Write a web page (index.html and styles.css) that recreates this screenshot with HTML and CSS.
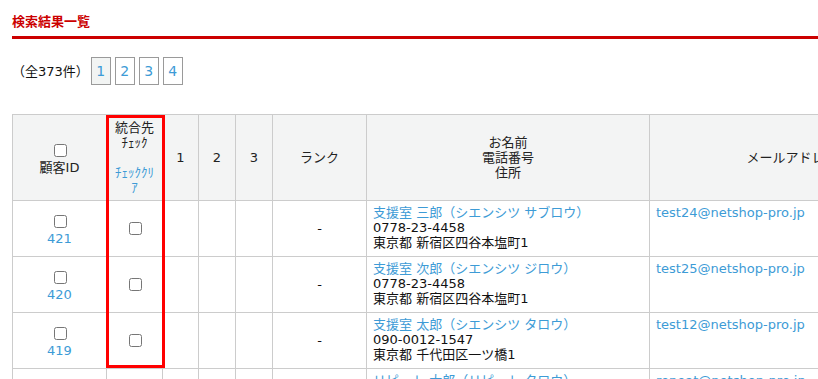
FILE: index.html
```html
<!DOCTYPE html>
<html lang="ja">
<head>
  <meta charset="UTF-8" />
  <meta name="viewport" content="width=device-width, initial-scale=1.0"/>
  <title>検索結果一覧</title>
  <link rel="stylesheet" href="styles.css">
</head>
<body>
  <main class="page">
    <h2 class="section-title">検索結果一覧</h2>

    <div class="pager">
      <span class="pager-count">（全373件）</span>
      <a href="#" class="pager-link current">1</a>
      <a href="#" class="pager-link">2</a>
      <a href="#" class="pager-link">3</a>
      <a href="#" class="pager-link">4</a>
    </div>

    <div class="result">
      <table class="result-table">
        <colgroup>
          <col class="col-id">
          <col class="col-merge">
          <col class="col-n1">
          <col class="col-num">
          <col class="col-num">
          <col class="col-rank">
          <col class="col-name">
          <col class="col-mail">
        </colgroup>
        <thead>
          <tr>
            <th><input type="checkbox" /><br>顧客ID</th>
            <th>統合先<br>ﾁｪｯｸ<br><br><a href="#">ﾁｪｯｸｸﾘｱ</a></th>
            <th>1</th>
            <th>2</th>
            <th>3</th>
            <th>ランク</th>
            <th>お名前<br>電話番号<br>住所</th>
            <th>メールアドレス</th>
          </tr>
        </thead>
        <tbody>
          <tr>
            <td class="center"><input type="checkbox" /><br><a href="#">421</a></td>
            <td class="center"><input type="checkbox" /></td>
            <td></td>
            <td></td>
            <td></td>
            <td class="center">-</td>
            <td><a href="#">支援室 三郎（シエンシツ サブロウ）</a><br>0778-23-4458<br>東京都 新宿区四谷本塩町1</td>
            <td><a href="#">test24@netshop-pro.jp</a></td>
          </tr>
          <tr>
            <td class="center"><input type="checkbox" /><br><a href="#">420</a></td>
            <td class="center"><input type="checkbox" /></td>
            <td></td>
            <td></td>
            <td></td>
            <td class="center">-</td>
            <td><a href="#">支援室 次郎（シエンシツ ジロウ）</a><br>0778-23-4458<br>東京都 新宿区四谷本塩町1</td>
            <td><a href="#">test25@netshop-pro.jp</a></td>
          </tr>
          <tr>
            <td class="center"><input type="checkbox" /><br><a href="#">419</a></td>
            <td class="center"><input type="checkbox" /></td>
            <td></td>
            <td></td>
            <td></td>
            <td class="center">-</td>
            <td><a href="#">支援室 太郎（シエンシツ タロウ）</a><br>090-0012-1547<br>東京都 千代田区一ツ橋1</td>
            <td><a href="#">test12@netshop-pro.jp</a></td>
          </tr>
          <tr>
            <td class="center"><input type="checkbox" /><br><a href="#">418</a></td>
            <td class="center"><input type="checkbox" /></td>
            <td></td>
            <td></td>
            <td></td>
            <td class="center">-</td>
            <td><a href="#">リピート 太郎（リピート タロウ）</a><br>090-0000-0000<br>東京都 千代田区</td>
            <td><a href="#">repeat@netshop-pro.jp</a></td>
          </tr>
        </tbody>
      </table>
      <div class="merge-frame"></div>
    </div>
  </main>
</body>
</html>
```

FILE: styles.css
```css
html, body { margin: 0; overflow: hidden; background: #fff; }
body {
  font-family: "DejaVu Sans", "Noto Sans CJK JP", sans-serif;
  font-size: 13px;
  line-height: 15px;
  color: #111;
}
a { color: #3d9bd6; text-decoration: none; }

.page { padding: 14px 0 0 12px; }

.section-title {
  margin: 0;
  font-size: 13px;
  line-height: 15px;
  font-weight: bold;
  color: #cc0000;
  padding-bottom: 7px;
  border-bottom: 3px solid #cc0000;
}

.pager {
  display: flex;
  align-items: center;
  gap: 4px;
  margin-top: 18px;
}
.pager-count { margin-right: -2px; }
.pager-link {
  box-sizing: border-box;
  width: 20px;
  height: 28px;
  display: flex;
  align-items: center;
  justify-content: center;
  border: 1px solid #9a9a9a;
  font-size: 14px;
}
.pager-link.current { background: #f2f4f3; }

.result { position: relative; margin-top: 29px; }
.result-table {
  border-collapse: collapse;
  table-layout: fixed;
  width: 923px;
}
.col-id { width: 94px; }
.col-merge { width: 56px; }
.col-n1 { width: 36px; }
.col-num { width: 37px; }
.col-rank { width: 94px; }
.col-name { width: 283px; }
.col-mail { width: 285px; }

.result-table th,
.result-table td {
  border: 1px solid #cccccc;
  padding: 4px 6px 6px;
  vertical-align: top;
  text-align: left;
}
.result-table th {
  background: #f3f4f4;
  font-weight: normal;
  color: #222;
  text-align: center;
  vertical-align: middle;
  padding: 5px 6px;
}
.result-table td { height: 45px; }
.result-table td.center { text-align: center; vertical-align: middle; padding: 4px 6px; }

.merge-frame {
  position: absolute;
  left: 94px;
  top: 1px;
  width: 59px;
  height: 253px;
  box-sizing: border-box;
  border: 3px solid #ff0000;
}
```
